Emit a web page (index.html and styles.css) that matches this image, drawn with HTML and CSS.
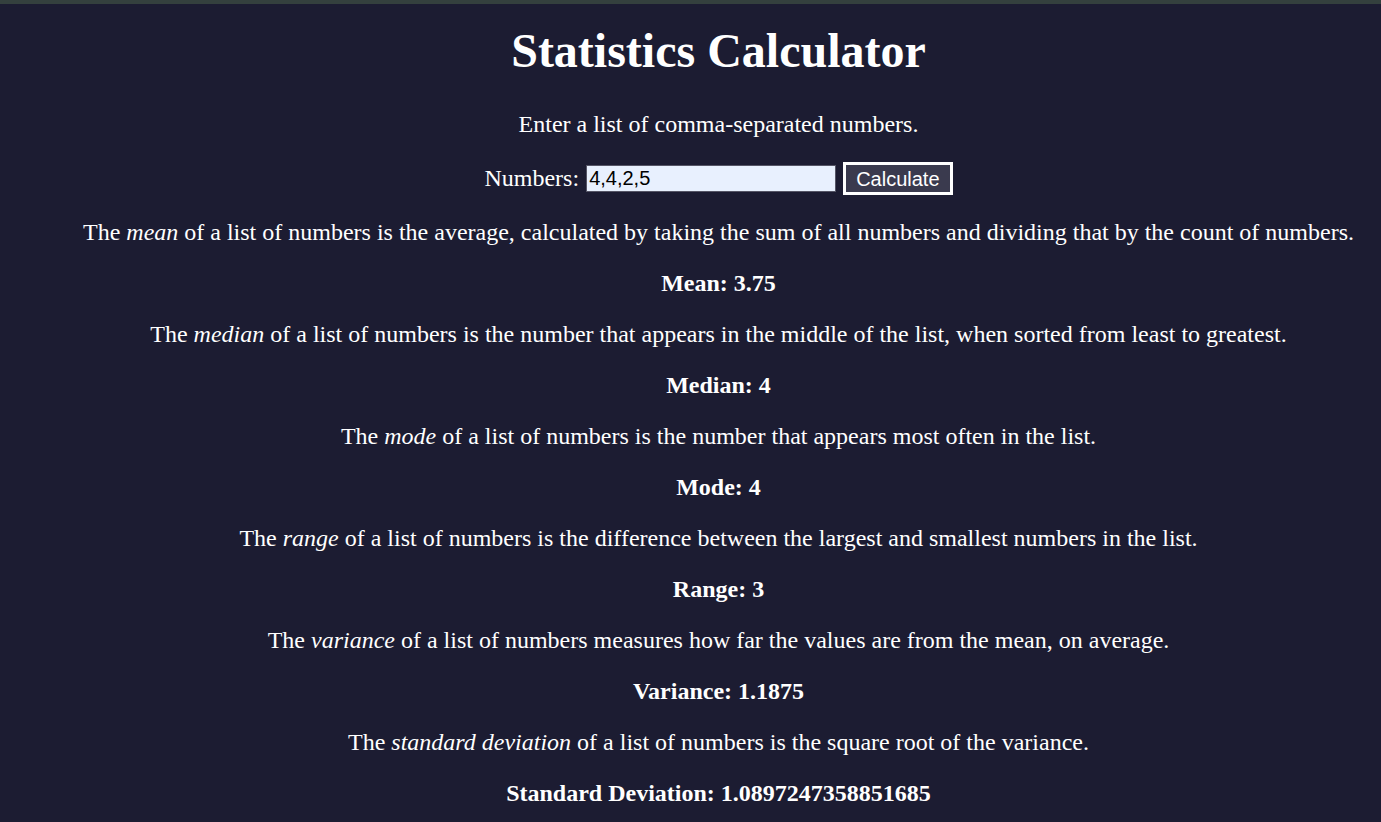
FILE: index.html
```html
<!DOCTYPE html>
<html>
<head>
<meta charset="utf-8">
<link rel="stylesheet" href="styles.css">
</head>
<body>
<div class="topbar"></div>
<main class="page">
  <h1 class="title">Statistics Calculator</h1>
  <p class="text">Enter a list of comma-separated numbers.</p>
  <form class="form">
    <label class="label" for="nums">Numbers:</label>
    <input class="input" id="nums" type="text" value="4,4,2,5">
    <button class="button" type="button">Calculate</button>
  </form>
  <p class="text">The <em>mean</em> of a list of numbers is the average, calculated by taking the sum of all numbers and dividing that by the count of numbers.</p>
  <p class="text result">Mean: 3.75</p>
  <p class="text">The <em>median</em> of a list of numbers is the number that appears in the middle of the list, when sorted from least to greatest.</p>
  <p class="text result">Median: 4</p>
  <p class="text">The <em>mode</em> of a list of numbers is the number that appears most often in the list.</p>
  <p class="text result">Mode: 4</p>
  <p class="text">The <em>range</em> of a list of numbers is the difference between the largest and smallest numbers in the list.</p>
  <p class="text result">Range: 3</p>
  <p class="text">The <em>variance</em> of a list of numbers measures how far the values are from the mean, on average.</p>
  <p class="text result">Variance: 1.1875</p>
  <p class="text">The <em>standard deviation</em> of a list of numbers is the square root of the variance.</p>
  <p class="text result">Standard Deviation: 1.0897247358851685</p>
</main>
</body>
</html>
```

FILE: styles.css
```css
html, body {
  margin: 0;
  padding: 0;
  background: #1c1c32;
  color: #ffffff;
  font-family: "Liberation Serif", "Times New Roman", serif;
}
.topbar {
  height: 4px;
  background: #34403e;
}
.page {
  padding-left: 56px;
  text-align: center;
}
.title {
  font-size: 48px;
  font-weight: bold;
  line-height: 55px;
  margin: 19px 0 33px;
}
.text {
  font-size: 24px;
  line-height: 27px;
  margin: 0 0 24px;
}
.result {
  font-weight: bold;
}
.form {
  display: flex;
  justify-content: center;
  align-items: center;
  gap: 7px;
  margin: 0 0 24px;
}
.label {
  font-size: 24px;
  line-height: 27px;
}
.input {
  box-sizing: border-box;
  width: 250px;
  height: 27px;
  padding: 1px 2px;
  border: 1px solid #555566;
  background: #e8f0fe;
  color: #000;
  font-family: "Liberation Sans", Arial, sans-serif;
  font-size: 20px;
}
.button {
  box-sizing: border-box;
  height: 33px;
  padding: 0 10px;
  border: 3px solid #ffffff;
  background: #3a3a4e;
  color: #ffffff;
  font-family: "Liberation Sans", Arial, sans-serif;
  font-size: 20px;
  line-height: 1;
}
```
